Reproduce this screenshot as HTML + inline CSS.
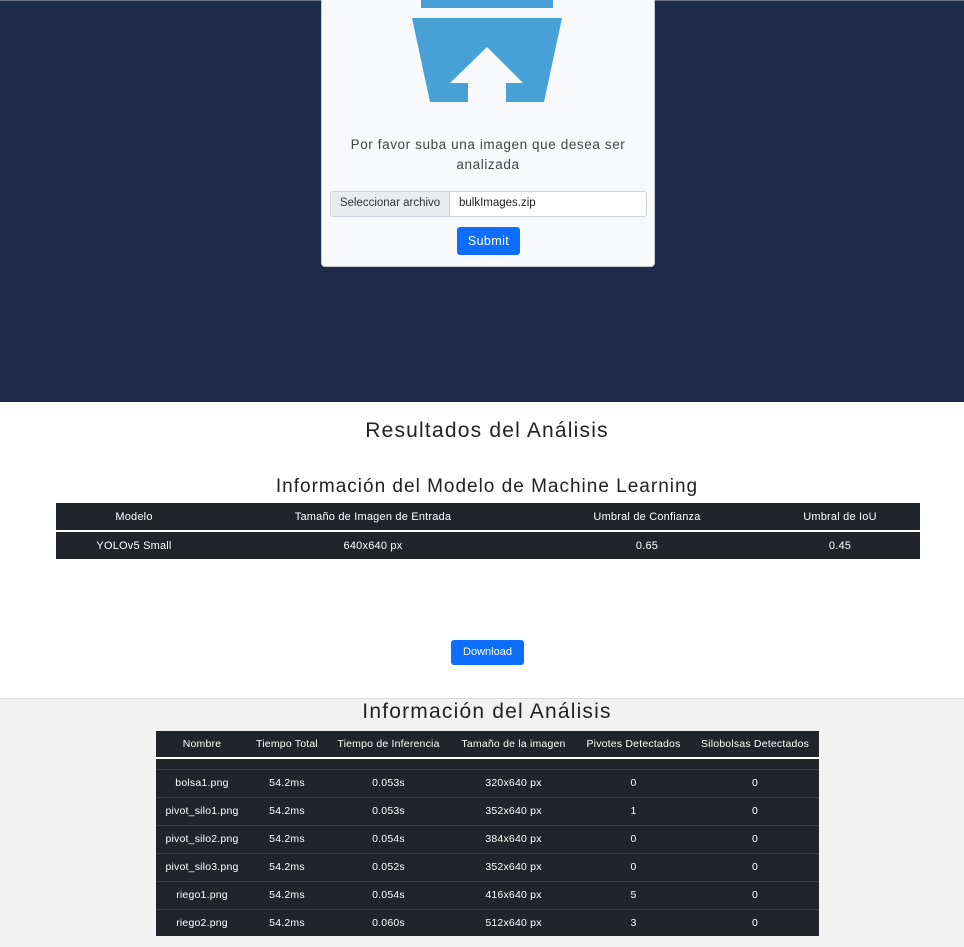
<!DOCTYPE html>
<html><head><meta charset="utf-8"><style>
*{box-sizing:border-box;margin:0;padding:0}
body{width:964px;height:947px;position:relative;font-family:"Liberation Sans",sans-serif;background:#fff;overflow:hidden;color:#212529}
.hero{position:absolute;left:0;top:0;width:964px;height:402px;background:#1c2b4b;border-top:1px solid #6b6f78}
.card{position:absolute;left:321px;top:0;width:334px;height:267px;background:#f8f9fa;border:1px solid #ccc;border-top:none;border-radius:0 0 4px 4px}
.abs{position:absolute}
.t{position:absolute;white-space:nowrap;text-align:center;transform:translateX(-50%)}
table{position:absolute;border-collapse:collapse;background:#212529;color:#fff;font-size:11px;letter-spacing:0.2px}
td,th{text-align:center;padding:0;white-space:nowrap}
th{font-weight:normal}
</style></head><body>
<div class="hero"></div>
<div class="card">
<svg class="abs" style="left:0;top:0" width="334" height="110">
<polygon points="99,0 231,0 231,8 99,8" fill="#47a0d6"/>
<polygon points="90,18 240,18 222,102 108,102" fill="#47a0d6"/>
<polygon points="165,47 201,83 184,83 184,102 146,102 146,83 128,83" fill="#f8f9fa"/>
</svg>
<div class="t" style="left:166px;top:135px;font-size:13.5px;color:#444;line-height:20px;text-align:center;white-space:normal;width:300px;letter-spacing:0.6px">Por favor suba una imagen que desea ser analizada</div>
<div class="abs" style="left:8px;top:191px;width:317px;height:26px;border:1px solid #ced4da;border-radius:3px;background:#fff;font-size:11.5px">
<div class="abs" style="left:0;top:0;width:119px;height:24px;background:#e9ecef;border-right:1px solid #ced4da;line-height:23px;text-align:center;color:#333">Seleccionar archivo</div>
<div class="abs" style="left:128px;top:0;line-height:23px;color:#222">bulkImages.zip</div>
</div>
<div class="abs" style="left:135px;top:227px;width:63px;height:28px;background:#0d6efd;border-radius:3px;color:#fff;font-size:12.5px;line-height:28px;text-align:center;letter-spacing:0.4px">Submit</div>
</div>
<div class="t" style="left:487px;top:419px;font-size:21px;color:#222;letter-spacing:1.2px">Resultados del Análisis</div>
<div class="t" style="left:487px;top:476px;font-size:19px;color:#222;letter-spacing:1px">Información del Modelo de Machine Learning</div>
<table style="left:56px;top:503px;width:864px">
<tr style="height:28px;border-bottom:2px solid #fff"><th style="width:156px">Modelo</th><th style="width:322px">Tamaño de Imagen de Entrada</th><th style="width:226px">Umbral de Confianza</th><th>Umbral de IoU</th></tr>
<tr style="height:28px"><td>YOLOv5 Small</td><td>640x640 px</td><td>0.65</td><td>0.45</td></tr>
</table>
<div class="abs" style="left:451px;top:640px;width:73px;height:25px;background:#0d6efd;border-radius:3px;color:#fff;font-size:11px;line-height:25px;text-align:center">Download</div>
<div class="abs" style="left:0;top:698px;width:964px;height:249px;background:#f2f2f2;border-top:1px solid #ddd"></div>
<div class="t" style="left:487px;top:700px;font-size:21px;color:#222;letter-spacing:1.2px">Información del Análisis</div>
<table style="left:156px;top:731px;width:663px;font-size:10.5px">
<tr style="height:27px;border-bottom:2px solid #fff"><th style="width:92px">Nombre</th><th style="width:78px">Tiempo Total</th><th style="width:125px">Tiempo de Inferencia</th><th style="width:125px">Tamaño de la imagen</th><th style="width:115px">Pivotes Detectados</th><th>Silobolsas Detectados</th></tr>
<tr style="height:11px;border-bottom:1px solid #3a3e44"><td colspan="6"></td></tr>
<tr style="height:28px;border-bottom:1px solid #3a3e44"><td>bolsa1.png</td><td>54.2ms</td><td>0.053s</td><td>320x640 px</td><td>0</td><td>0</td></tr>
<tr style="height:28px;border-bottom:1px solid #3a3e44"><td>pivot_silo1.png</td><td>54.2ms</td><td>0.053s</td><td>352x640 px</td><td>1</td><td>0</td></tr>
<tr style="height:28px;border-bottom:1px solid #3a3e44"><td>pivot_silo2.png</td><td>54.2ms</td><td>0.054s</td><td>384x640 px</td><td>0</td><td>0</td></tr>
<tr style="height:28px;border-bottom:1px solid #3a3e44"><td>pivot_silo3.png</td><td>54.2ms</td><td>0.052s</td><td>352x640 px</td><td>0</td><td>0</td></tr>
<tr style="height:28px;border-bottom:1px solid #3a3e44"><td>riego1.png</td><td>54.2ms</td><td>0.054s</td><td>416x640 px</td><td>5</td><td>0</td></tr>
<tr style="height:27px"><td>riego2.png</td><td>54.2ms</td><td>0.060s</td><td>512x640 px</td><td>3</td><td>0</td></tr>
</table>
</body></html>
